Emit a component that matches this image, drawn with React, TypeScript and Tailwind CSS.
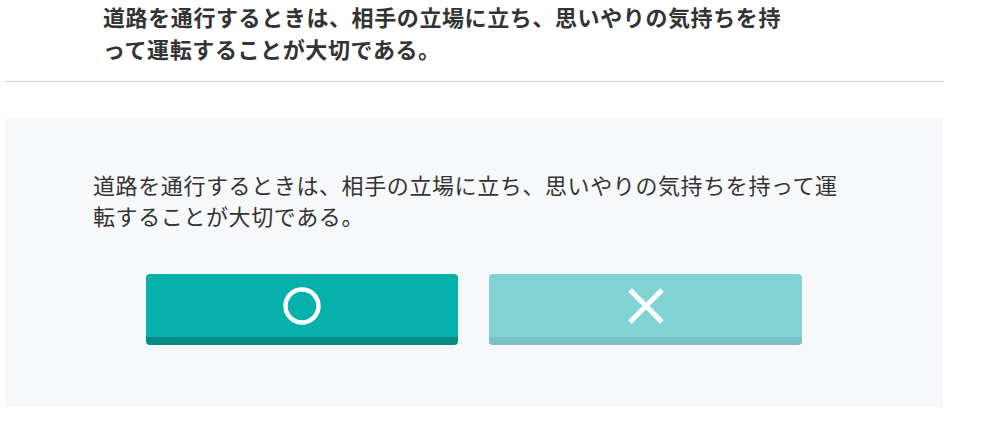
const font = { fontFamily: '"Noto Sans CJK JP", "Noto Sans", sans-serif' };

const Circle = () => (
  <svg width="38" height="38" viewBox="0 0 38 38" fill="none">
    <circle cx="19" cy="19" r="16.5" stroke="white" strokeWidth="4.5" />
  </svg>
);

const Cross = () => (
  <svg width="38" height="38" viewBox="0 0 38 38" fill="none">
    <path d="M3 3L35 35M35 3L3 35" stroke="white" strokeWidth="5" />
  </svg>
);

export default function App() {
  return (
    <div className="w-[992px] h-[424px] bg-white overflow-hidden" style={font}>
      <div className="w-[938px] ml-[5px]">
        <div className="border-b border-[#d0d0d0] pl-[98px] pb-[17px]">
          <h2 className="w-[690px] text-[22px] leading-[32px] tracking-[0.6px] font-bold text-[#333]">
            道路を通行するときは、相手の立場に立ち、思いやりの気持ちを持って運転することが大切である。
          </h2>
        </div>

        <div className="mt-[37px] bg-[#f7f8fa] px-[88px] pt-[50px] pb-[62px]">
          <p className="text-[22px] leading-[31px] tracking-[0.6px] text-[#333]">
            道路を通行するときは、相手の立場に立ち、思いやりの気持ちを持って運転することが大切である。
          </p>

          <div className="mt-[43px] flex justify-center gap-[31px]">
            <button className="w-[312px] h-[71px] rounded-[4px] bg-[#07b1ab] border-b-[8px] border-[#068c88] flex items-center justify-center">
              <Circle />
            </button>
            <button className="w-[313px] h-[71px] rounded-[4px] bg-[#80d5d4] border-b-[8px] border-[#7cc1c1] flex items-center justify-center">
              <Cross />
            </button>
          </div>
        </div>
      </div>
    </div>
  );
}
